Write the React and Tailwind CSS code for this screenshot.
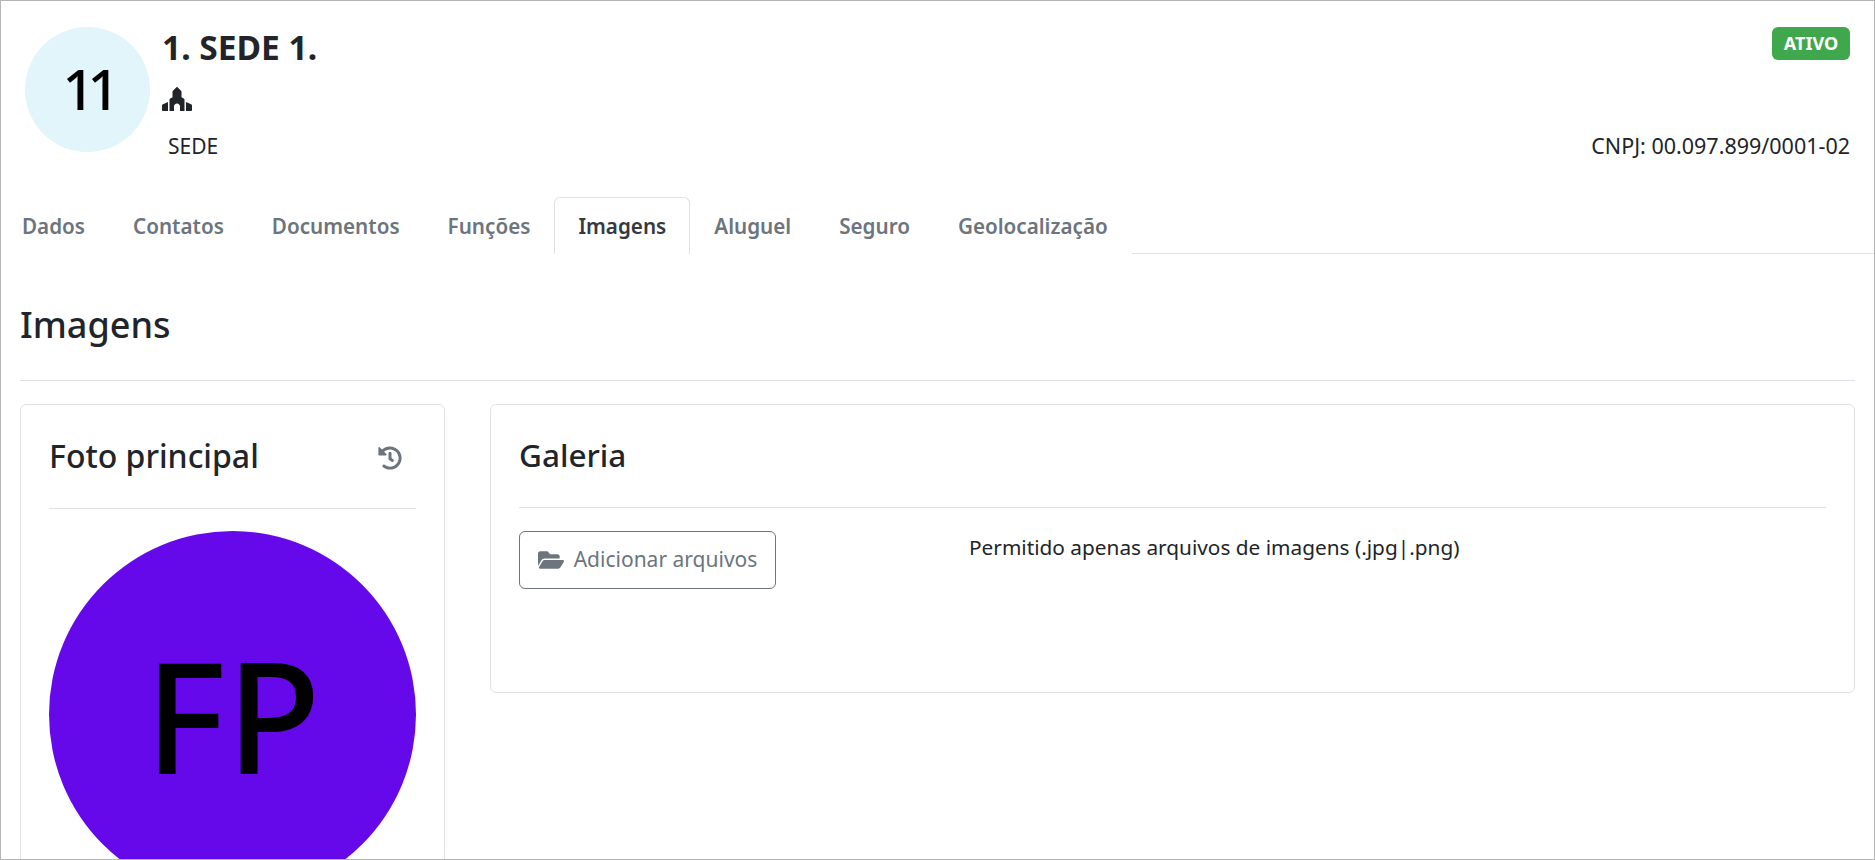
import React from 'react';
import { FaPlaceOfWorship, FaHistory, FaFolderOpen } from 'react-icons/fa';

const TABS = ['Dados', 'Contatos', 'Documentos', 'Funções', 'Imagens', 'Aluguel', 'Seguro', 'Geolocalização'];

function Tab({ label }) {
  const active = label === 'Imagens';
  return (
    <div
      className={
        active
          ? 'h-[57px] pt-[1px] px-[23px] flex items-center text-[20.65px] font-semibold text-[#343a40] border border-b-0 border-[#dee2e6] rounded-t-md'
          : 'h-[57px] pt-[1px] px-[23px] flex items-center text-[20.65px] font-semibold text-[#6c757d] border border-transparent'
      }
    >
      {label}
    </div>
  );
}

export default function App() {
  return (
    <div className="h-[860px] w-[1875px] overflow-hidden bg-white border border-[#b5b5b5] text-[#212529] font-['Noto_Sans','Open_Sans',sans-serif]">
      <div className="flex pl-6 pr-[24px] pt-[26px] h-[196px]">
        <div className="w-[125px] h-[125px] rounded-full bg-[#e1f5fa] flex items-center justify-center pb-[3px] text-[56px] font-medium tracking-[-7px] text-black shrink-0">
          11
        </div>
        <div className="ml-3 flex flex-col">
          <div className="text-[33.5px] font-bold leading-[38px] mt-[1px]">1. SEDE 1.</div>
          <FaPlaceOfWorship className="mt-[21px] text-[30px] h-[24px]" />
          <div className="mt-[22px] ml-[6px] text-[21px] leading-[27px]">SEDE</div>
        </div>
        <div className="ml-auto flex flex-col items-end">
          <div className="bg-[#3fa84c] text-white text-[18px] font-bold rounded-md h-[33px] w-[78px] justify-center flex items-center">ATIVO</div>
          <div className="mt-[72px] text-[21.5px] leading-[27px]">CNPJ: 00.097.899/0001-02</div>
        </div>
      </div>

      <div className="flex">
        <div className="flex -ml-[3px]">
          {TABS.map((t) => (
            <Tab key={t} label={t} />
          ))}
        </div>
        <div className="flex-1 border-b border-[#dee2e6]" />
      </div>

      <div className="px-[19px]">
        <h2 className="text-[36px] font-medium leading-[44px] mt-[49px]">Imagens</h2>
        <div className="border-t border-[#dee2e6] mt-[33px]" />

        <div className="flex gap-[45px] mt-[23px] items-start">
          <div className="w-[425px] h-[600px] border border-[#dee2e6] rounded-md px-[28px] shrink-0">
            <div className="h-[104px] flex items-center justify-between border-b border-[#dee2e6]">
              <div className="text-[32px] font-medium -mt-[2px]">Foto principal</div>
              <FaHistory className="mt-[3px] text-[24px] text-[#6c757d] mr-[14px]" />
            </div>
            <div className="mt-[22px] w-[367px] h-[367px] rounded-full bg-[#6509ea] flex items-center justify-center text-[155px] font-medium text-black">
              FP
            </div>
          </div>

          <div className="flex-1 h-[289px] border border-[#dee2e6] rounded-md px-[28px]">
            <div className="h-[103px] flex items-center border-b border-[#dee2e6]">
              <div className="text-[31.5px] font-medium -mt-[2px]">Galeria</div>
            </div>
            <div className="flex mt-[23px]">
              <div className="w-[257px] h-[58px] border border-[#6c757d] rounded-md flex items-center justify-center gap-[10px] text-[#6c757d] text-[21px]">
                <FaFolderOpen className="text-[26px]" />
                <span>Adicionar arquivos</span>
              </div>
              <div className="ml-[193px] mt-[3px] text-[20.8px] leading-[27px]">Permitido apenas arquivos de imagens (.jpg|.png)</div>
            </div>
          </div>
        </div>
      </div>
    </div>
  );
}
